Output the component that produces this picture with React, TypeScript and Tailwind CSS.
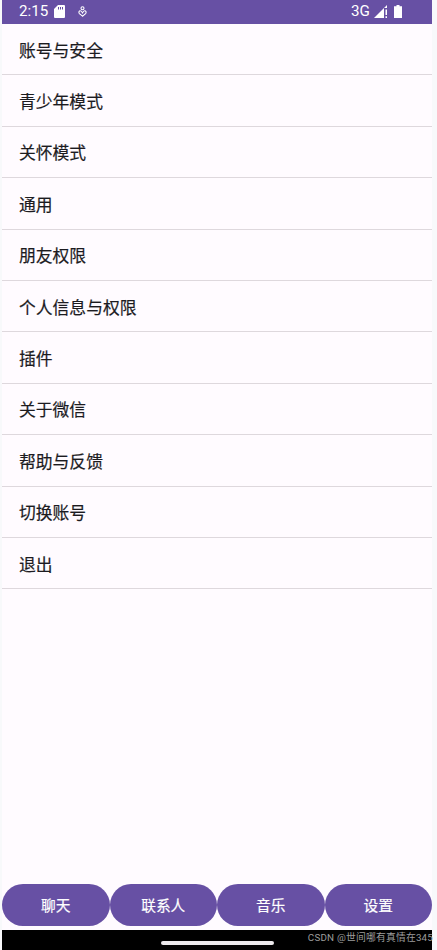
const SETTINGS = [
  "账号与安全",
  "青少年模式",
  "关怀模式",
  "通用",
  "朋友权限",
  "个人信息与权限",
  "插件",
  "关于微信",
  "帮助与反馈",
  "切换账号",
  "退出",
];

const TABS = ["聊天", "联系人", "音乐", "设置"];

function StatusBar() {
  return (
    <header className="flex h-6 shrink-0 items-start justify-between bg-[#6750a4] pl-[17px] pr-[30px] font-['Roboto',sans-serif] text-white">
      <div className="flex items-start">
        <span className="w-[35px] text-[15.2px] leading-[23px]">2:15</span>
        <svg className="mt-[5px] h-[13px] w-[11px]" viewBox="0 0 11 13" fill="none" aria-hidden>
          <path
            fill="currentColor"
            fillRule="evenodd"
            d="M4 0h6q1 0 1 1v11q0 1-1 1H1q-1 0-1-1V4zM4 2v2.5h1V2zM6 2v2.5h1V2zM8 2v2.5h1V2z"
          />
        </svg>
        <svg className="ml-[13px] mt-[6px] h-[11px] w-[9px]" viewBox="0 0 9 11" fill="none" stroke="currentColor" aria-hidden>
          <circle cx="4.5" cy="2.2" r="1.5" strokeWidth="1.1" />
          <path
            strokeWidth="1.1"
            d="M4.5 10.2 1.4 7.6C.4 6.4 1 4.8 2.3 4.8c1 0 1.6 1.2 2.2 2.1.6-.9 1.2-2.1 2.2-2.1 1.300 0 1.900 1.600.900 2.800z"
          />
        </svg>
      </div>
      <div className="flex items-start">
        <span className="w-[23px] text-[15.2px] leading-[23px]">3G</span>
        <svg className="mt-[5px] h-[13px] w-[14px]" viewBox="0 0 14 13" aria-hidden>
          <path fill="currentColor" d="M0 13 10 3v10z" />
          <path fill="currentColor" d="M10 3 13 0v3zM11.5 4.5H13V10h-1.5zM11.5 11.300H13V13h-1.5z" />
        </svg>
        <svg className="ml-[6px] mt-[5px] h-[13px] w-2" viewBox="0 0 8 13" aria-hidden>
          <path fill="currentColor" d="M2.5 0h3v1.3H8V13H0V1.3h2.5z" />
        </svg>
      </div>
    </header>
  );
}

export default function App() {
  return (
    <div className="h-[950px] w-[437px] overflow-hidden bg-[#f8f9fb] pl-[2px] font-['Noto_Sans_CJK_SC',sans-serif]">
      <div className="flex h-full w-[430px] flex-col bg-[#fffbff]">
        <StatusBar />
        <ul className="flex-1">
          {SETTINGS.map((label) => (
            <li
              key={label}
              className="flex h-[51.4px] items-center border-b border-[#ded8dd] pl-[17px] pt-px text-[16.8px] leading-6 text-[#1c1b1f] [-webkit-text-stroke:0.2px]"
            >
              {label}
            </li>
          ))}
        </ul>
        <nav className="mb-1 grid h-[42px] shrink-0 grid-cols-4">
          {TABS.map((label) => (
            <button
              key={label}
              type="button"
              className="rounded-full bg-[#6750a4] text-[14.7px] text-white [-webkit-text-stroke:0.2px]"
            >
              {label}
            </button>
          ))}
        </nav>
        <footer className="relative h-5 shrink-0 bg-black pt-[11px]">
          <div className="mx-auto h-1 w-[113px] rounded-full bg-[#ece9ec]" />
          <span className="absolute -right-px top-0 whitespace-nowrap font-['Roboto','Noto_Sans_CJK_SC',sans-serif] text-[9.8px] leading-4 tracking-[0.2px] text-[#9c9c9c]">
            CSDN @世间哪有真情在345
          </span>
        </footer>
      </div>
    </div>
  );
}
